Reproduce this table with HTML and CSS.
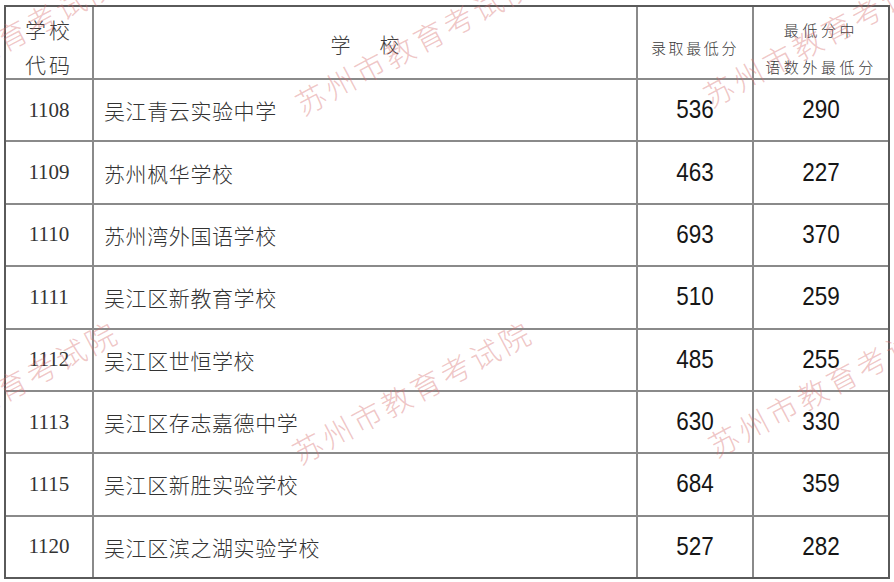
FILE: index.html
```html
<!DOCTYPE html>
<html lang="zh-CN">
<head>
<meta charset="utf-8">
<title>录取最低分</title>
<link rel="stylesheet" href="styles.css">
</head>
<body>
<div class="page">
  <div class="scores">
    <div class="row head">
      <div class="cell h-code"><div>学校</div><div>代码</div></div>
      <div class="cell h-name">学<span class="gap"></span>校</div>
      <div class="cell h-min">录取最低分</div>
      <div class="cell h-sub"><div>最低分中</div><div>语数外最低分</div></div>
    </div>
    <div class="row"><div class="cell code">1108</div><div class="cell name">吴江青云实验中学</div><div class="cell num"><span>536</span></div><div class="cell num"><span>290</span></div></div>
    <div class="row"><div class="cell code">1109</div><div class="cell name">苏州枫华学校</div><div class="cell num"><span>463</span></div><div class="cell num"><span>227</span></div></div>
    <div class="row"><div class="cell code">1110</div><div class="cell name">苏州湾外国语学校</div><div class="cell num"><span>693</span></div><div class="cell num"><span>370</span></div></div>
    <div class="row"><div class="cell code">1111</div><div class="cell name">吴江区新教育学校</div><div class="cell num"><span>510</span></div><div class="cell num"><span>259</span></div></div>
    <div class="row"><div class="cell code">1112</div><div class="cell name">吴江区世恒学校</div><div class="cell num"><span>485</span></div><div class="cell num"><span>255</span></div></div>
    <div class="row"><div class="cell code">1113</div><div class="cell name">吴江区存志嘉德中学</div><div class="cell num"><span>630</span></div><div class="cell num"><span>330</span></div></div>
    <div class="row"><div class="cell code">1115</div><div class="cell name">吴江区新胜实验学校</div><div class="cell num"><span>684</span></div><div class="cell num"><span>359</span></div></div>
    <div class="row"><div class="cell code">1120</div><div class="cell name">吴江区滨之湖实验学校</div><div class="cell num"><span>527</span></div><div class="cell num"><span>282</span></div></div>
  </div>
  <div class="marks" aria-hidden="true">
    <span class="wm wm1">苏州市教育考试院</span>
    <span class="wm wm2">苏州市教育考试院</span>
    <span class="wm wm3">苏州市教育考试院</span>
    <span class="wm wm4">苏州市教育考试院</span>
    <span class="wm wm5">苏州市教育考试院</span>
    <span class="wm wm6">苏州市教育考试院</span>
  </div>
</div>
</body>
</html>
```

FILE: styles.css
```css
html, body {
  margin: 0;
  padding: 0;
  background: #fff;
}
.page {
  position: relative;
  width: 894px;
  height: 582px;
  overflow: hidden;
  background: #fff;
  padding: 5px 0 0 4px;
  box-sizing: border-box;
}
.scores {
  box-sizing: border-box;
  width: 886px;
  height: 574px;
  border: 2px solid #5a5a5a;
  display: flex;
  flex-direction: column;
  font-family: "Noto Sans CJK SC", sans-serif;
  color: #333;
}
.row {
  flex: 1 1 0;
  display: grid;
  grid-template-columns: 88px 544px 116px 134px;
  grid-template-rows: minmax(0, 1fr);
  border-bottom: 2px solid #8a8a8a;
  min-height: 0;
}
.row:last-child {
  border-bottom: none;
}
.row.head {
  flex: 0 0 73px;
  box-sizing: border-box;
}
.cell {
  border-right: 2px solid #8a8a8a;
  display: flex;
  align-items: center;
  justify-content: center;
  min-width: 0;
  min-height: 0;
}
.cell:last-child {
  border-right: none;
}
.head .cell {
  box-sizing: border-box;
  color: #3a3a3a;
  font-weight: 300;
  text-align: center;
}
.h-code {
  flex-direction: column;
  justify-content: flex-start;
  padding-top: 4.5px;
  font-size: 21px;
  line-height: 35px;
  letter-spacing: 3px;
}
.h-name {
  font-size: 20px;
  padding-top: 4px;
}
.gap {
  display: inline-block;
  width: 29px;
}
.h-min {
  font-size: 15px;
  letter-spacing: 2.6px;
  padding-top: 10px;
}
.h-sub {
  flex-direction: column;
  justify-content: flex-start;
  padding-top: 4px;
  font-size: 15px;
  letter-spacing: 3.6px;
  line-height: 37px;
}
.code {
  font-family: "Liberation Serif", serif;
  font-size: 21px;
  color: #333;
}
.name {
  justify-content: flex-start;
  font-size: 21px;
  letter-spacing: 0.6px;
  padding-left: 10px;
  font-weight: 300;
  color: #333;
}
.num {
  font-family: "Liberation Sans", sans-serif;
  font-size: 22.5px;
  color: #161616;
}
.num span {
  display: inline-block;
  transform: scaleY(1.15);
}
.marks {
  position: absolute;
  inset: 0;
  pointer-events: none;
}
.wm {
  position: absolute;
  font-family: "Noto Sans CJK SC", sans-serif;
  font-weight: 300;
  font-size: 30px;
  line-height: 30px;
  letter-spacing: 3.4px;
  white-space: nowrap;
  color: rgba(214, 110, 110, 0.4);
  transform-origin: 0 50%;
  transform: rotate(-28deg);
}
.wm1 { left: -120px; top: 89px; }
.wm2 { left: 297px; top: 90px; }
.wm3 { left: 705px; top: 82px; }
.wm4 { left: -120px; top: 439px; }
.wm5 { left: 294px; top: 439px; }
.wm6 { left: 710px; top: 432px; }
```
